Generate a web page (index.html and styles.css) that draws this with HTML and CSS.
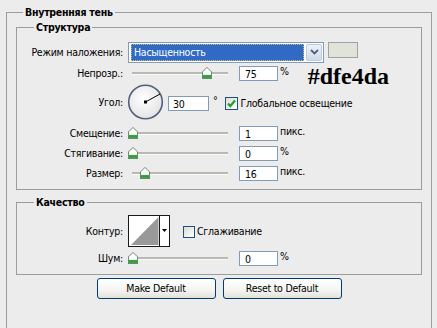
FILE: index.html
```html
<!DOCTYPE html>
<html lang="ru">
<head>
<meta charset="utf-8">
<title>Внутренняя тень</title>
<link rel="stylesheet" href="styles.css">
</head>
<body>
<fieldset class="group outer">
  <legend>Внутренняя тень</legend>

  <fieldset class="group inner structure">
    <legend>Структура</legend>

    <div class="row row-blend">
      <label class="lbl">Режим наложения:</label>
      <div class="select">
        <span class="sel-value">Насыщенность</span>
        <span class="sel-btn"><svg width="9" height="6" viewBox="0 0 9 6"><path d="M1 1 L4.5 4.5 L8 1" fill="none" stroke="#4d6185" stroke-width="1.8"/></svg></span>
      </div>
      <span class="swatch"></span>
    </div>

    <div class="row row-opacity">
      <label class="lbl">Непрозр.:</label>
      <div class="slider"><span class="thumb" style="left:70px"></span></div>
      <input class="num" value="75">
      <span class="unit">%</span>
      <span class="hex">#dfe4da</span>
    </div>

    <div class="row row-angle">
      <label class="lbl">Угол:</label>
      <svg class="dial" width="37" height="36" viewBox="0 0 37 36">
        <defs>
          <radialGradient id="dg" cx="45%" cy="40%" r="60%">
            <stop offset="0" stop-color="#ffffff"/>
            <stop offset="1" stop-color="#e4e4e4"/>
          </radialGradient>
        </defs>
        <circle cx="18.5" cy="18" r="16.8" fill="url(#dg)" stroke="#51607f" stroke-width="1.6"/>
        <line x1="18.5" y1="18" x2="33" y2="10" stroke="#000" stroke-width="1"/>
        <rect x="17" y="16.5" width="3" height="3" fill="#000"/>
      </svg>
      <input class="num num-angle" value="30">
      <span class="deg">°</span>
      <span class="check checked"><svg width="11" height="11" viewBox="0 0 11 11"><path d="M2 5.5 L4.3 8 L9 2.5" fill="none" stroke="#21a121" stroke-width="2.2"/></svg></span>
      <span class="check-lbl">Глобальное освещение</span>
    </div>

    <div class="row row-slide first">
      <label class="lbl">Смещение:</label>
      <div class="slider"><span class="thumb" style="left:-4px"></span></div>
      <input class="num" value="1">
      <span class="unit">пикс.</span>
    </div>

    <div class="row row-slide">
      <label class="lbl">Стягивание:</label>
      <div class="slider"><span class="thumb" style="left:-4px"></span></div>
      <input class="num" value="0">
      <span class="unit">%</span>
    </div>

    <div class="row row-slide">
      <label class="lbl">Размер:</label>
      <div class="slider"><span class="thumb" style="left:8px"></span></div>
      <input class="num" value="16">
      <span class="unit">пикс.</span>
    </div>
  </fieldset>

  <fieldset class="group inner quality">
    <legend>Качество</legend>

    <div class="row row-contour">
      <label class="lbl">Контур:</label>
      <svg class="contour" width="42" height="32" viewBox="0 0 42 32">
        <rect x="0.5" y="0.5" width="41" height="31" fill="#fff" stroke="#1a1a1a"/>
        <polygon points="3,30 30.5,2 30.5,30" fill="#999"/>
        <line x1="31.5" y1="1" x2="31.5" y2="31" stroke="#1a1a1a"/>
        <polygon points="34,14 39,14 36.5,17" fill="#000"/>
      </svg>
      <span class="check check-aa"></span>
      <span class="check-lbl">Сглаживание</span>
    </div>

    <div class="row row-noise">
      <label class="lbl">Шум:</label>
      <div class="slider"><span class="thumb" style="left:-4px"></span></div>
      <input class="num" value="0">
      <span class="unit">%</span>
    </div>
  </fieldset>

  <div class="buttons">
    <button class="btn">Make Default</button>
    <button class="btn">Reset to Default</button>
  </div>
</fieldset>
</body>
</html>
```

FILE: styles.css
```css
* { box-sizing: border-box; }

html, body {
  margin: 0;
  background: #ececec;
}

body {
  padding: 0 5px 0 6px;
  height: 328px;
  overflow: hidden;
  font-family: "DejaVu Sans Condensed", "DejaVu Sans", sans-serif;
  font-stretch: condensed;
  font-size: 10.5px;
  letter-spacing: -0.25px;
  line-height: 13px;
  color: #000;
}

.group {
  margin: 0;
  padding: 0;
  min-width: 0;
  border: 1px solid #9c9c9c;
}

.group > legend {
  font-weight: bold;
  padding: 0 2px;
  line-height: 14px;
}

.outer {
  margin-top: 5px;
  padding: 1px 9px 60px;
  border-bottom: none;
}

.outer > legend {
  margin-left: 7px;
}

.inner > legend {
  margin-left: 17px;
}

.structure {
  padding-bottom: 8px;
  margin-bottom: 5px;
}

.quality {
  padding-bottom: 8px;
}

.row {
  display: flex;
  align-items: center;
}

.lbl {
  flex: none;
  width: 106px;
  text-align: right;
  white-space: nowrap;
}

/* blend mode row */
.row-blend {
  margin-top: 8px;
  height: 20px;
}

.select {
  flex: none;
  display: flex;
  align-items: center;
  width: 196px;
  height: 21px;
  margin-left: 5px;
  padding: 1px 1px 1px 2px;
  border: 1px solid #7f9db9;
  background: #fff;
}

.sel-value {
  flex: 1;
  height: 17px;
  padding-left: 2px;
  line-height: 15px;
  color: #fff;
  background: #316ac5;
  border: 1px dotted #d8c060;
  margin-right: 2px;
}

.sel-btn {
  flex: none;
  width: 16px;
  height: 17px;
  display: flex;
  align-items: center;
  justify-content: center;
  border: 1px solid #bfcbe0;
  border-radius: 2px;
  background: linear-gradient(#eef2f8, #cfd9ea);
}

.swatch {
  flex: none;
  width: 30px;
  height: 16px;
  margin-left: 4px;
  margin-top: -4px;
  border: 1px solid #a2a2a2;
  background: #dfe4da;
}

/* slider rows */
.row-opacity {
  margin-top: 4px;
  height: 15px;
}

.slider {
  position: relative;
  flex: none;
  width: 96px;
  height: 15px;
  margin-left: 9px;
}

.slider::before {
  content: "";
  position: absolute;
  left: 0;
  right: 0;
  top: 6px;
  height: 2px;
  background: #b9b9b2;
  border-bottom: 1px solid #fbfbfb;
}

.thumb {
  position: absolute;
  top: 1px;
  width: 10px;
  height: 12px;
}

.thumb::before {
  content: "";
  position: absolute;
  left: 0;
  top: 0;
  width: 10px;
  height: 12px;
  clip-path: polygon(50% 0, 100% 40%, 100% 100%, 0 100%, 0 40%);
  background: linear-gradient(#7c8b80, #5a8f63);
}

.thumb::after {
  content: "";
  position: absolute;
  left: 1px;
  top: 1px;
  width: 8px;
  height: 9px;
  clip-path: polygon(50% 0, 100% 42%, 100% 100%, 0 100%, 0 42%);
  background: linear-gradient(#ffffff 60%, #e6f0e6 75%, #2fb53a 76%, #21a121);
}

.num {
  flex: none;
  width: 39px;
  height: 15px;
  margin: 0 0 0 11px;
  padding: 0 0 0 5px;
  border: 1px solid #7f9db9;
  background: #fff;
  font: inherit;
  letter-spacing: inherit;
  line-height: 13px;
  color: #000;
  outline: none;
}

.unit {
  margin-left: 2px;
  align-self: flex-start;
  margin-top: -1px;
}

.hex {
  margin-left: 19px;
  margin-top: 5px;
  font-family: "Liberation Serif", "Times New Roman", serif;
  font-stretch: normal;
  letter-spacing: 0;
  font-weight: 700;
  font-size: 24px;
  line-height: 24px;
  white-space: nowrap;
}

/* angle row */
.row-angle {
  margin-top: 3px;
  height: 36px;
}

.dial {
  flex: none;
  margin-left: 4px;
}

.num-angle {
  width: 41px;
  margin-left: 4px;
  margin-top: 3px;
  padding-left: 4px;
}

.deg {
  margin-left: 4px;
  align-self: flex-start;
  margin-top: 10px;
}

.check {
  flex: none;
  width: 13px;
  height: 13px;
  margin-left: 8px;
  display: flex;
  align-items: center;
  justify-content: center;
  border: 1px solid #1c5180;
  background: linear-gradient(135deg, #dcdcd7, #ffffff);
}

.row-angle .check {
  margin-top: 3px;
}

.check-lbl {
  margin-left: 2px;
  white-space: nowrap;
}

.row-angle .check-lbl {
  margin-top: 2px;
}

.row-slide {
  margin-top: 5px;
  height: 15px;
}

.row-slide.first {
  margin-top: 6px;
}

/* quality */
.row-contour {
  margin-top: 6px;
  height: 32px;
}

.contour {
  flex: none;
  margin-left: 5px;
}

.check-aa {
  width: 12px;
  height: 12px;
  margin-left: 13px;
  margin-top: 2px;
}

.row-noise {
  margin-top: 4px;
  height: 15px;
}

/* buttons */
.buttons {
  display: flex;
  justify-content: center;
  gap: 7px;
  margin-top: 3px;
}

.btn {
  width: 119px;
  height: 21px;
  padding: 0;
  border: 1px solid #003c74;
  border-radius: 3px;
  background: linear-gradient(#ffffff, #f4f4f0 60%, #e3e1d8);
  font: inherit;
  letter-spacing: inherit;
  color: #000;
}
```
